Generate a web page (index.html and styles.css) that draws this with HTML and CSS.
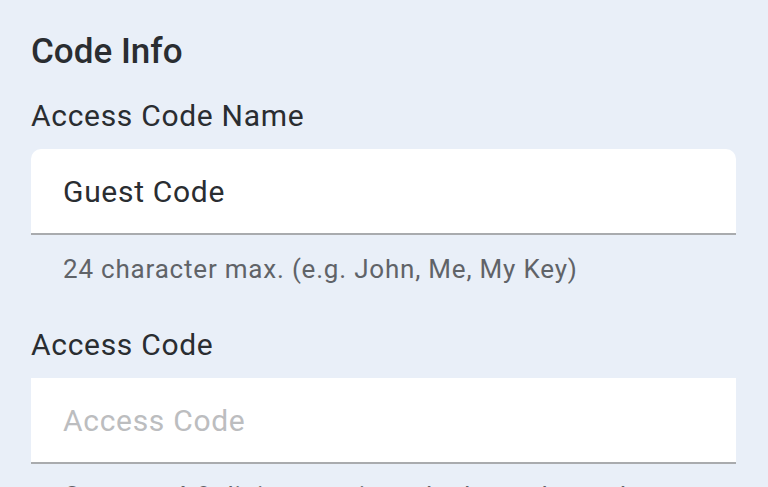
FILE: index.html
```html
<!DOCTYPE html>
<html lang="en">
<head>
    <meta charset="UTF-8">
    <meta name="viewport" content="width=device-width, initial-scale=1.0">
    <title>Code Info</title>
    <link rel="stylesheet" href="styles.css">
</head>
<body>
    <div class="form">
        <h2 class="section-title">Code Info</h2>

        <div class="field">
            <label class="field-label" for="code-name">Access Code Name</label>
            <input class="field-input rounded" id="code-name" type="text" value="Guest Code">
            <div class="field-help">24 character max. (e.g. John, Me, My Key)</div>
        </div>

        <div class="field">
            <label class="field-label" for="code">Access Code</label>
            <input class="field-input" id="code" type="text" placeholder="Access Code">
            <div class="field-help second">Create a 4-8 digit numeric code that only you know.</div>
        </div>
    </div>
</body>
</html>
```

FILE: styles.css
```css
body {
    font-family: Roboto, "Noto Sans", sans-serif;
    margin: 0;
    background-color: #e9eff8;
    color: #2a2d31;
    overflow: hidden;
}
.form {
    padding: 31px 32px 0 31px;
}
.section-title {
    font-size: 35px;
    font-weight: 500;
    line-height: 42px;
    margin: 0 0 25px;
}
.field {
    display: flex;
    flex-direction: column;
}
.field + .field {
    margin-top: 43px;
}
.field-label {
    font-size: 30px;
    line-height: 36px;
    letter-spacing: 0.7px;
    margin-bottom: 15px;
}
.field-input {
    font-family: inherit;
    font-size: 30px;
    line-height: 36px;
    letter-spacing: 0.7px;
    height: 86px;
    box-sizing: border-box;
    padding: 0 32px;
    border: none;
    border-bottom: 2px solid #a9abae;
    border-radius: 0;
    background-color: #fff;
    color: #2a2d31;
    outline: none;
}
.field-input.rounded {
    border-radius: 10px 10px 0 0;
}
.field-input::placeholder {
    color: #bcbdbf;
}
.field-help {
    font-size: 26px;
    line-height: 30px;
    letter-spacing: 0.8px;
    color: #606368;
    padding-left: 32px;
    margin-top: 19px;
    white-space: nowrap;
}
.field-help.second {
    margin-top: 17px;
}
```
